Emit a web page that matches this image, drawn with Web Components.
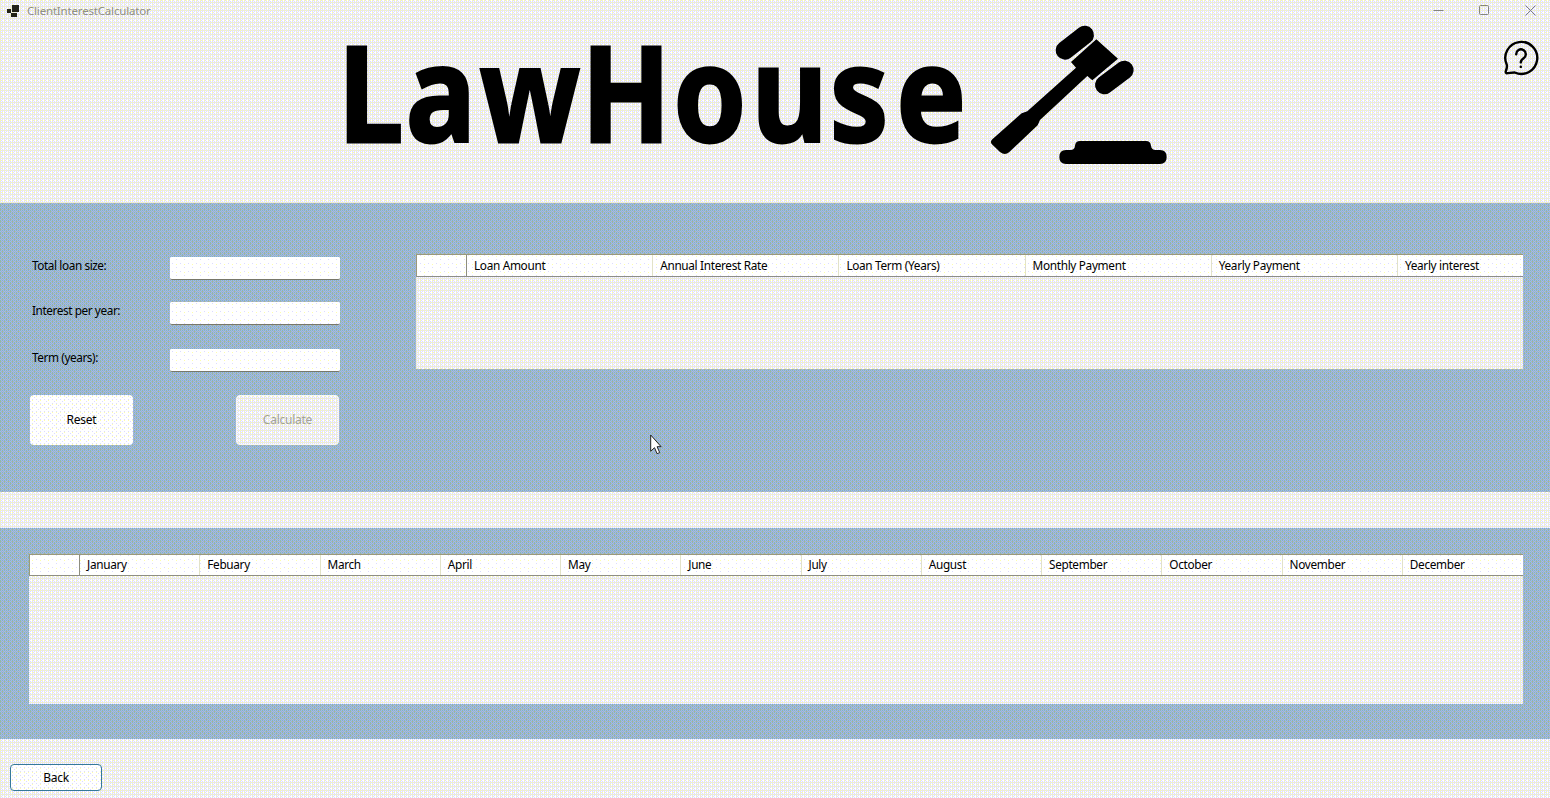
<!DOCTYPE html>
<html lang="en">
<head>
<meta charset="utf-8">
<title>ClientInterestCalculator</title>
<style>
html,body{margin:0;height:100%;overflow:hidden}
body{font:12px/16px "Noto Sans","Open Sans",sans-serif;letter-spacing:-.25px;color:#000}
</style>
</head>
<body>
<calc-window></calc-window>
<script>
// Ordered 8x8 threshold matrices for a 3-3-2 bit palette.
const RG=[[17,9,23,15,16,8,22,14],[5,29,3,27,4,28,2,26],[21,13,19,11,20,12,18,10],[0,24,6,30,1,25,7,31],[16,8,22,14,17,9,23,15],[4,28,2,26,5,29,3,27],[20,12,18,10,21,13,19,11],[1,25,7,31,0,24,6,30]];
const BL=[[0,55,14,68,3,58,17,72],[37,18,50,32,40,22,54,35],[9,64,5,59,13,67,8,63],[46,27,41,23,49,31,44,26],[2,57,16,71,1,56,15,70],[39,21,52,34,38,19,51,33],[11,66,7,62,10,65,6,60],[48,30,43,25,47,29,42,23]];
function texture(r,g,b){
  const q=(v,d,n)=>Math.round(Math.min(n,Math.floor((v+d)*n/255))*255/n);
  let s='';
  for(let y=0;y<8;y++)for(let x=0;x<8;x++)
    s+=`<rect x="${x}" y="${y}" width="1" height="1" fill="rgb(${q(r,RG[y][x],7)},${q(g,RG[y][x],7)},${q(b,BL[y][x],3)})"/>`;
  return `url("data:image/svg+xml,${encodeURIComponent(`<svg xmlns="http://www.w3.org/2000/svg" width="8" height="8" shape-rendering="crispEdges">${s}</svg>`)}") 0 0/8px 8px fixed`;
}
const root=document.documentElement.style;
root.setProperty('--face',texture(241,241,240)+' #f0f0f0');
root.setProperty('--panel',texture(159,183,212)+' #99b4d1');
root.setProperty('--button',texture(252,252,252)+' #fdfdfd');
root.setProperty('--white',texture(254,254,254)+' #fff');

function define(name,html,setup){
  const t=document.createElement('template');t.innerHTML=html;
  customElements.define(name,class extends HTMLElement{
    constructor(){super();this.attachShadow({mode:'open'}).append(t.content.cloneNode(true));}
    connectedCallback(){if(setup)setup(this,this.shadowRoot);}
  });
}

define('title-bar',`<style>
:host{display:flex;height:21px;align-items:center;color:#8f8f84;box-sizing:border-box;padding:0 14px 0 7px}
svg{flex:none;display:block}.name{margin-left:8px;flex:1;font-size:11.5px;letter-spacing:-.18px}
.ctl{display:flex;gap:35px}</style>
<svg width="12" height="12" viewBox="0 0 12 12"><path fill="#222218" d="M0 4h4v4H0zM5 0h7v7H5zM4 8h6v4H4z"/><path stroke="#e8e8d8" stroke-width=".8" d="M4.5 0v7.5H10" fill="none"/></svg>
<span class="name"><slot></slot></span>
<span class="ctl"><svg width="11" height="11" viewBox="0 0 11 11" fill="none" stroke="#85857c"><path d="M.5 5.5h10"/></svg>
<svg width="11" height="11" viewBox="0 0 11 11" fill="none" stroke="#85857c"><rect x=".5" y=".5" width="9" height="9" rx="1"/></svg>
<svg width="11" height="11" viewBox="0 0 11 11" fill="none" stroke="#85857c"><path d="M.5.5l10 10M10.5.5l-10 10"/></svg></span>`);

define('brand-header',`<style>
:host{display:flex;height:182px;box-sizing:border-box;padding:0 11px 0 340px;justify-content:space-between;align-items:flex-start}
svg{display:block;overflow:visible}.help{margin-top:18px}</style>
<svg width="850" height="150" viewBox="340 21 850 150">
<g transform="scale(.88 1)"><text y="142.3" font-family="Noto Sans" font-weight="700" font-size="133" letter-spacing="0" stroke="#000" stroke-width="2.8" x="384.1 461.1 545.3 660.4 765 854 943 1018.4">LawHouse</text></g>
<g transform="translate(740 20) scale(.33333)">
<path stroke="#000" stroke-width="56" stroke-linecap="round" d="M1034 45L975 91M1153 150L1093 195"/>
<path d="M1069 58L1134 116L1057 181L1042 168L900 300L893 316L808 396Q795 408 780 396L755 372Q750 365 757 358L845 280L862 274L1008 143L993 126Z"/>
<path d="M1020 363h198q14 0 15 14q2 13 14 13h13q20 0 20 21t-20 21H978q-20 0-20-21t20-21h13q13 0 14-13q1-14 15-14z"/></g></svg>
<svg class="help" width="38" height="38" viewBox="-.5 0 38 38" fill="none" stroke="#000" stroke-width="2.4" stroke-linecap="round" stroke-linejoin="round"><path d="M5.2 25.5A16 16 0 1 1 13.2 33.5C10 33.5 7.5 34.2 5.1 34.2Q4 34 4.2 32.6C5.4 29.6 6 28 5.2 25.5Z"/><path d="M14.7 15.2a4.8 4.8 0 1 1 7.4 4c-2 1.3-2.8 2.1-2.8 4.2"/><path d="M19.3 27.8v.1"/></svg>`);

define('form-field',`<style>
:host{display:flex;justify-content:space-between;align-items:flex-start;letter-spacing:-.42px;font-size:11.8px}
div{width:170px;height:23px;box-sizing:border-box;background:var(--white);border-bottom:1px solid #77776a;border-radius:2px}</style>
<span><slot></slot></span><div></div>`);

define('push-button',`<style>
:host{display:flex;align-items:center;justify-content:center;box-sizing:border-box;width:103px;height:50px;border-radius:4px;background:var(--button)}
:host([disabled]){background:var(--face);color:#a2a298;border:1px solid #f8f8f0}
:host([focused]){width:92px;height:27px;border:1px solid #35799a}</style><slot></slot>`);

define('data-grid',`<style>
:host{display:block;background:var(--face);box-sizing:border-box;font-size:11.8px;letter-spacing:-.32px}
.head{display:grid;box-sizing:border-box;border:1px solid #99997c;border-right:0;border-bottom-color:#8e8e86;background:var(--white)}
.head span{box-sizing:border-box;padding-left:7px;border-left:1px solid #e2e2c8;overflow:hidden;white-space:nowrap}
.head span:first-child{border:0}.head span:nth-child(2){border-left-color:#8e8e80}</style><div class="head"></div>`,
(el,sr)=>{
  const h=sr.querySelector('.head'),w=el.getAttribute('col');
  const names=el.getAttribute('columns').split('|');
  h.style.gridTemplateColumns=`49px repeat(${names.length-1},${w}px) 1fr`;
  const hh=+el.getAttribute('head');h.style.height=hh+'px';h.style.lineHeight=(hh-2)+'px';
  if(hh===22)h.style.lineHeight='19px';
  h.innerHTML='<span></span>'+names.map(n=>`<span>${n}</span>`).join('');
});

define('mouse-pointer',`<style>:host{position:absolute;left:650px;top:434px}svg{display:block}</style>
<svg width="14" height="22" viewBox="0 0 14 22"><path d="M.7 1v16.2l3.8-3.5 2.6 6 2.6-1.1-2.6-5.9h4z" fill="#fff" stroke="#222" stroke-width="1"/></svg>`);

define('calc-window',`<style>
:host{display:flex;flex-direction:column;width:1550px;height:798px;background:var(--face);position:relative;overflow:hidden}
section{background:var(--panel);box-sizing:border-box}
.top{height:289px;padding:51px 27px 0 30px;display:flex;justify-content:space-between;align-items:flex-start}
.form{width:310px;padding-top:3px}
.fields{padding-left:2px;display:grid;grid-template-rows:45px 47px 46px}
.actions{display:flex;justify-content:space-between;width:309px}
.loan{width:1107px;height:115px}
.year{margin-top:36px;height:211px;padding:26px 27px 0 29px}
.year data-grid{height:150px}
footer{padding:25px 10px 0}</style>
<title-bar>ClientInterestCalculator</title-bar>
<brand-header></brand-header>
<section class="top"><div class="form"><div class="fields">
<form-field>Total loan size:</form-field><form-field>Interest per year:</form-field><form-field>Term (years):</form-field></div>
<div class="actions"><push-button>Reset</push-button><push-button disabled>Calculate</push-button></div></div>
<data-grid class="loan" head="23" col="186.2" columns="Loan Amount|Annual Interest Rate|Loan Term (Years)|Monthly Payment|Yearly Payment|Yearly interest"></data-grid></section>
<section class="year"><data-grid head="22" col="120.25" columns="January|Febuary|March|April|May|June|July|August|September|October|November|December"></data-grid></section>
<footer><push-button focused>Back</push-button></footer>
<mouse-pointer></mouse-pointer>`);
</script>
</body>
</html>
